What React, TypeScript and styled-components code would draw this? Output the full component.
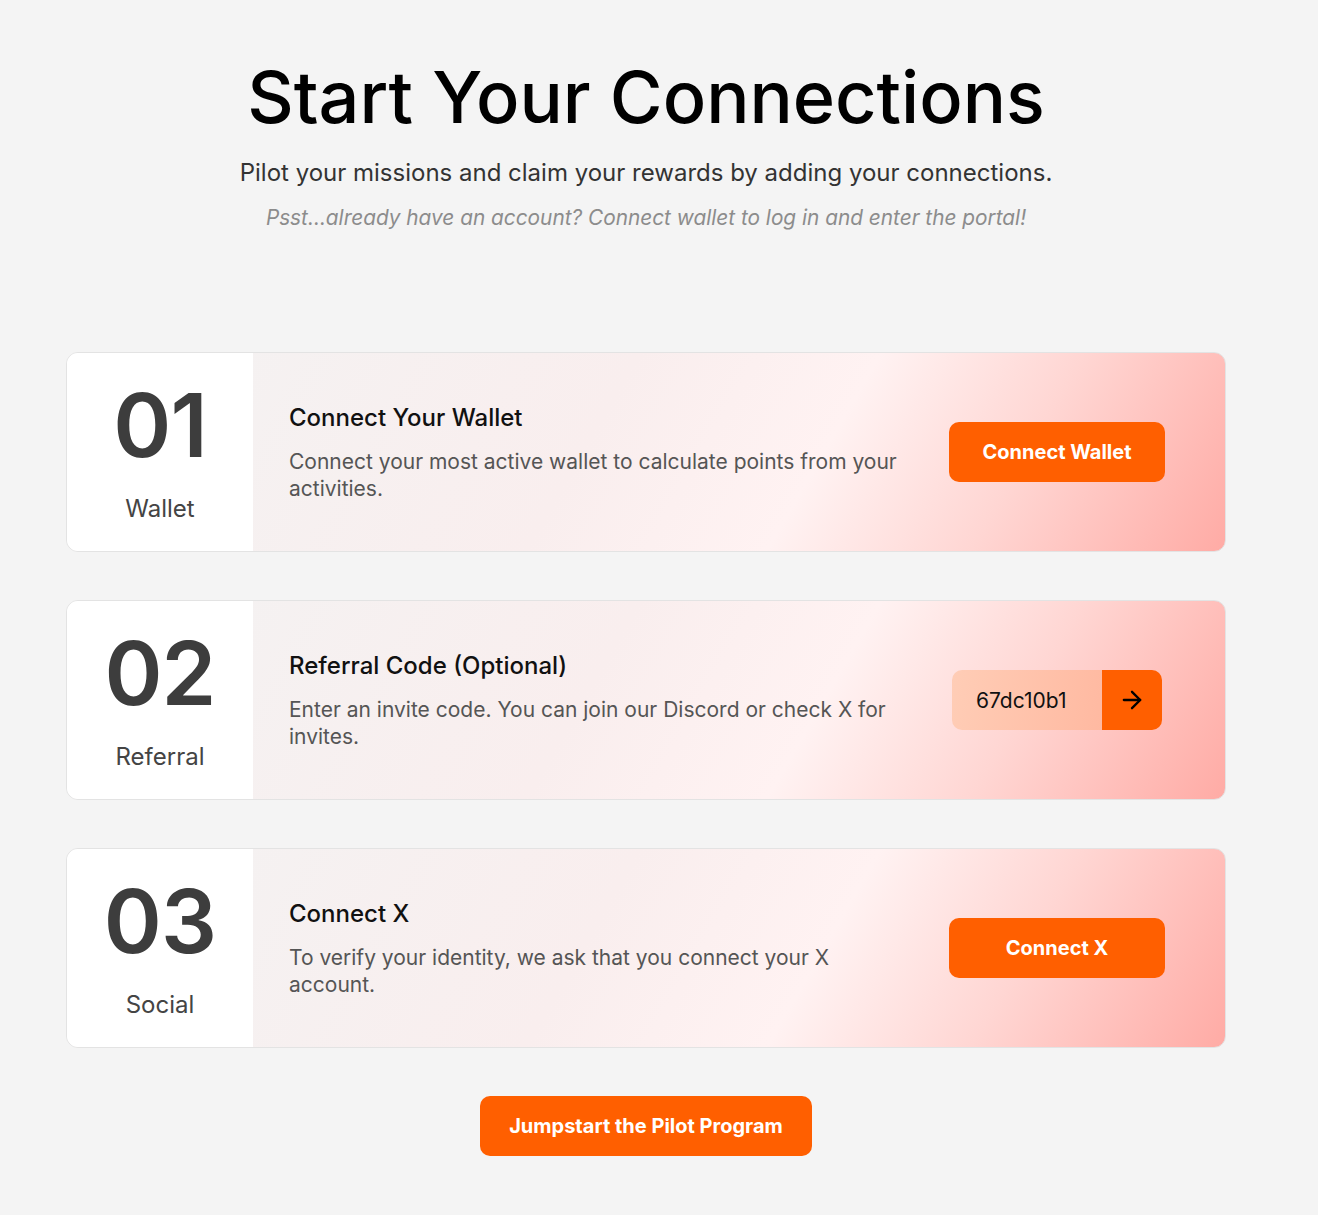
import React from 'react';
import styled, { createGlobalStyle } from 'styled-components';
import { ArrowRight } from 'lucide-react';

const GlobalStyle = createGlobalStyle`
  html, body {
    margin: 0;
    padding: 0;
    background: #f4f4f4;
    font-family: Inter, "Noto Sans", sans-serif;
    -webkit-font-smoothing: antialiased;
  }
  * {
    box-sizing: border-box;
  }
`;

const Page = styled.div`
  width: 1292px;
  display: flex;
  flex-direction: column;
  align-items: center;
  padding-top: 57px;
  padding-bottom: 59px;
`;

const Title = styled.h1`
  margin: 0;
  font-size: 72px;
  line-height: 79px;
  font-weight: 500;
  color: #000;
`;

const Subtitle = styled.p`
  margin: 21px 0 0;
  font-size: 24px;
  line-height: 32px;
  color: #333;
`;

const Hint = styled.p`
  margin: 15px 0 0;
  font-size: 20.8px;
  line-height: 28px;
  font-style: italic;
  color: #8c8c8c;
`;

const Steps = styled.div`
  margin-top: 120px;
  width: 1160px;
  display: flex;
  flex-direction: column;
  gap: 48px;
`;

const Card = styled.div`
  display: flex;
  height: 200px;
  border: 1px solid #e3e3e3;
  border-radius: 12px;
  overflow: hidden;
  background: linear-gradient(
    120deg,
    #f3f3f3 0%,
    #f9eeee 45%,
    #fff2f2 64%,
    #ffd6d3 80%,
    #ffaba5 100%
  );
`;

const NumberPanel = styled.div`
  width: 186px;
  flex-shrink: 0;
  background: #fff;
  display: flex;
  flex-direction: column;
  align-items: center;
  justify-content: center;
  color: #3d3d3d;
`;

const StepNumber = styled.div`
  font-size: 88px;
  line-height: 88px;
  font-weight: 600;
  letter-spacing: -0.01em;
`;

const StepLabel = styled.div`
  margin-top: 25px;
  font-size: 24px;
  line-height: 30px;
  color: #444;
`;

const Body = styled.div`
  flex: 1;
  display: flex;
  align-items: center;
  padding: 0 60px 0 36px;
  gap: 40px;
`;

const TextCol = styled.div`
  flex: 1;
  display: flex;
  flex-direction: column;
`;

const StepTitle = styled.div`
  font-size: 24px;
  line-height: 30px;
  font-weight: 500;
  color: #111;
`;

const StepDesc = styled.div`
  margin-top: 15px;
  font-size: 21px;
  line-height: 27px;
  color: #555;
  max-width: 615px;
`;

const ActionCol = styled.div`
  width: 216px;
  flex-shrink: 0;
  display: flex;
  justify-content: center;
`;

const OrangeButton = styled.button<{ $width?: number }>`
  width: ${(p) => (p.$width ? `${p.$width}px` : '100%')};
  height: 60px;
  border: none;
  border-radius: 10px;
  background: #ff5f00;
  color: #fff;
  font-family: Inter, "Noto Sans", sans-serif;
  font-size: 20px;
  font-weight: 700;
  cursor: pointer;
`;

const CodeBox = styled.div`
  width: 210px;
  height: 60px;
  display: flex;
  border-radius: 10px;
  overflow: hidden;
`;

const CodeInput = styled.input`
  flex: 1;
  min-width: 0;
  border: none;
  outline: none;
  padding: 0 0 0 24px;
  background: linear-gradient(100deg, #ffcdb6 0%, #ffb9a1 100%);
  font-family: Inter, "Noto Sans", sans-serif;
  font-size: 21px;
  color: #111;
`;

const ArrowButton = styled.button`
  width: 60px;
  border: none;
  background: #ff5f00;
  display: flex;
  align-items: center;
  justify-content: center;
  color: #000;
  cursor: pointer;
`;

const Footer = styled.div`
  margin-top: 48px;
`;

interface StepProps {
  num: string;
  label: string;
  title: string;
  desc: string;
  children: React.ReactNode;
}

function Step({ num, label, title, desc, children }: StepProps) {
  return (
    <Card>
      <NumberPanel>
        <StepNumber>{num}</StepNumber>
        <StepLabel>{label}</StepLabel>
      </NumberPanel>
      <Body>
        <TextCol>
          <StepTitle>{title}</StepTitle>
          <StepDesc>{desc}</StepDesc>
        </TextCol>
        <ActionCol>{children}</ActionCol>
      </Body>
    </Card>
  );
}

export default function App() {
  return (
    <>
      <GlobalStyle />
      <Page>
        <Title>Start Your Connections</Title>
        <Subtitle>Pilot your missions and claim your rewards by adding your connections.</Subtitle>
        <Hint>Psst...already have an account? Connect wallet to log in and enter the portal!</Hint>
        <Steps>
          <Step
            num="01"
            label="Wallet"
            title="Connect Your Wallet"
            desc="Connect your most active wallet to calculate points from your activities."
          >
            <OrangeButton>Connect Wallet</OrangeButton>
          </Step>
          <Step
            num="02"
            label="Referral"
            title="Referral Code (Optional)"
            desc="Enter an invite code. You can join our Discord or check X for invites."
          >
            <CodeBox>
              <CodeInput defaultValue="67dc10b1" />
              <ArrowButton>
                <ArrowRight size={28} strokeWidth={2} />
              </ArrowButton>
            </CodeBox>
          </Step>
          <Step
            num="03"
            label="Social"
            title="Connect X"
            desc="To verify your identity, we ask that you connect your X account."
          >
            <OrangeButton>Connect X</OrangeButton>
          </Step>
        </Steps>
        <Footer>
          <OrangeButton $width={332}>Jumpstart the Pilot Program</OrangeButton>
        </Footer>
      </Page>
    </>
  );
}
